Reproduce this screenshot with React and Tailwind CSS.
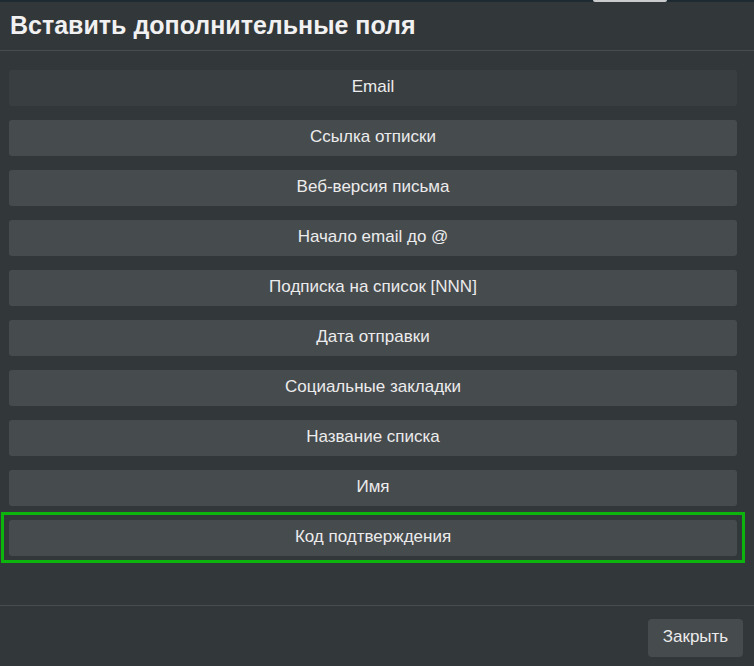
import React from 'react';

const fields = [
  'Email',
  'Ссылка отписки',
  'Веб-версия письма',
  'Начало email до @',
  'Подписка на список [NNN]',
  'Дата отправки',
  'Социальные закладки',
  'Название списка',
  'Имя',
];

export default function App() {
  return (
    <div
      className="flex flex-col h-[666px] w-[754px] bg-[#32373a] text-[#ececec] overflow-hidden"
      style={{ fontFamily: '"Liberation Sans", Arial, sans-serif' }}
    >
      {/* strip of the page behind the modal */}
      <div className="h-[2px] bg-[#1d2a32] flex shrink-0">
        <div className="ml-[593px] w-[74px] h-[2px] bg-[#c9cbcc] rounded-b-sm" />
      </div>

      <div className="h-[49px] flex items-center px-[10px] border-b border-[#474c50] shrink-0">
        <h2 className="text-[25px] font-bold text-[#f1f1f1] leading-none pb-[1px]">
          Вставить дополнительные поля
        </h2>
      </div>

      <div className="flex-1 flex flex-col gap-[14px] pl-[9px] pr-[17px] pt-[19px]">
        {fields.map((f, i) => (
          <button
            key={f}
            className={
              'h-9 w-full rounded-[3px] text-[17px] pb-[2px] ' +
              (i === 0 ? 'bg-[#393e41]' : 'bg-[#464b4e]')
            }
          >
            {f}
          </button>
        ))}
        <div className="-mx-[8px] -my-[8px] border-[3px] border-[#0db40d] pt-[5px] px-[5px] pb-[4px]">
          <button className="h-9 w-full rounded-[3px] text-[17px] pb-[2px] bg-[#464b4e]">
            Код подтверждения
          </button>
        </div>
      </div>

      <div className="h-[61px] border-t border-[#474c50] flex justify-end items-start pt-[13px] pr-[11px] shrink-0">
        <button className="h-[38px] w-[95px] rounded-[4px] bg-[#464b4e] text-[17px] pb-[2px]">
          Закрыть
        </button>
      </div>
    </div>
  );
}
